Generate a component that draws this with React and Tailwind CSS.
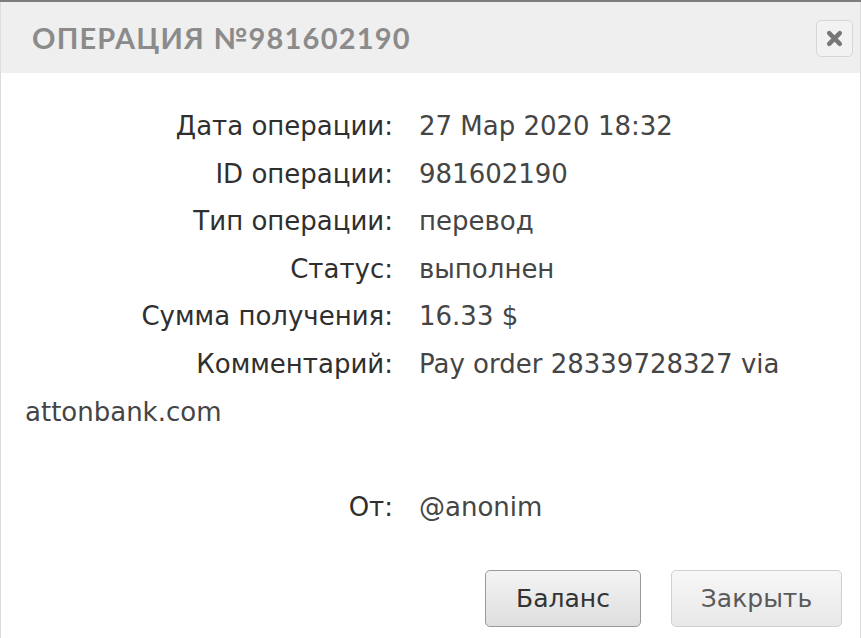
import React from 'react'

const rows = [
    ['Дата операции:', '27 Мар 2020 18:32'],
    ['ID операции:', '981602190'],
    ['Тип операции:', 'перевод'],
    ['Статус:', 'выполнен'],
    ['Сумма получения:', '16.33 $'],
]

const Label = ({ children }) => (
    <span className="inline-block w-[368px] mr-[26px] text-right text-[#2f2f2f]">{children}</span>
)

const App = () => {
    return (
        <div className="w-[861px] h-[638px] overflow-hidden bg-white border-t-2 border-[#7d7d7d]">
            <div className="h-full border-x border-[#dcdcdc]">
                <div className="h-[71px] bg-[#efefef] flex items-center justify-between pl-[31px] pr-[7px]">
                    <h1 className="font-['Lato',sans-serif] font-bold text-[29px] tracking-[1.2px] text-[#8b8b8b]">
                        ОПЕРАЦИЯ №981602190
                    </h1>
                    <button className="w-[37px] h-[37px] mt-[2px] rounded-[5px] border border-[#d6d6d6] bg-[#f2f2f2] flex items-center justify-center">
                        <svg width="17" height="17" viewBox="0 0 16 16">
                            <path d="M3 3 L13 13 M13 3 L3 13" stroke="#767676" strokeWidth="4.2" strokeLinecap="round" />
                        </svg>
                    </button>
                </div>

                <div className="px-[24px] pt-[30px] font-['DejaVu_Sans',sans-serif] text-[26px] leading-[47.6px] text-[#454545]">
                    {rows.map(([label, value]) => (
                        <div key={label}>
                            <Label>{label}</Label>
                            {value}
                        </div>
                    ))}
                    <p>
                        <Label>Комментарий:</Label>
                        Pay order 28339728327 via attonbank.com
                    </p>
                    <div className="h-[47.6px]"></div>
                    <div>
                        <Label>От:</Label>
                        @anonim
                    </div>
                </div>

                <div className="mt-[39px] flex justify-end gap-[30px] pr-[18px] font-['DejaVu_Sans',sans-serif] text-[25px] leading-none">
                    <button className="w-[156px] h-[57px] rounded-[5px] border border-[#9a9a9a] bg-gradient-to-b from-[#f4f4f4] to-[#dedede] text-[#333]">
                        Баланс
                    </button>
                    <button className="w-[171px] h-[57px] rounded-[5px] border border-[#d0d0d0] bg-gradient-to-b from-[#f7f7f7] to-[#e8e8e8] text-[#5a5a5a]">
                        Закрыть
                    </button>
                </div>
            </div>
        </div>
    )
}

export default App
